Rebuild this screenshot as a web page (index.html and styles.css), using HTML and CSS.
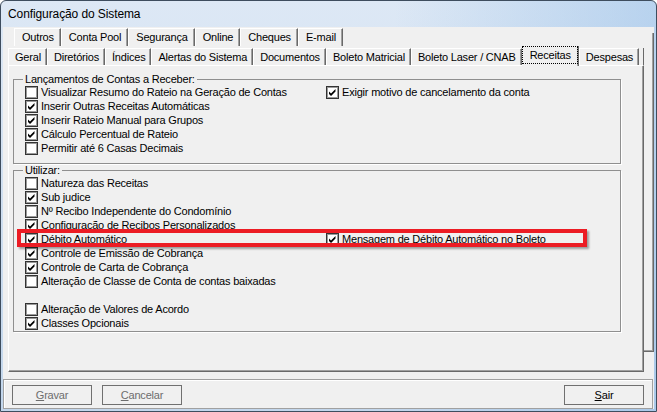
FILE: index.html
```html
<!DOCTYPE html>
<html lang="pt">
<head>
<meta charset="utf-8">
<title>Configuração do Sistema</title>
<link rel="stylesheet" href="styles.css">
</head>
<body>
<div class="window">
  <div class="titlebar"><span class="title">Configuração do Sistema</span></div>
  <div class="client">
    <div class="tabstack">
      <div class="tabmain">
        <div class="tabrow row1">
          <div class="tab">Outros</div>
          <div class="tab">Conta Pool</div>
          <div class="tab">Segurança</div>
          <div class="tab">Online</div>
          <div class="tab">Cheques</div>
          <div class="tab">E-mail</div>
        </div>
        <div class="tabrow row2">
          <div class="tab">Geral</div>
          <div class="tab">Diretórios</div>
          <div class="tab">Índices</div>
          <div class="tab">Alertas do Sistema</div>
          <div class="tab">Documentos</div>
          <div class="tab">Boleto Matricial</div>
          <div class="tab">Boleto Laser / CNAB</div>
          <div class="tab active"><span class="focus">Receitas</span></div>
          <div class="tab">Despesas</div>
          <div class="tabfill"></div>
        </div>
        <div class="panel">
          <fieldset class="group g1">
            <legend>Lançamentos de Contas a Receber:</legend>
            <div class="row">
              <label class="cb"><span class="box"></span>Visualizar Resumo do Rateio na Geração de Contas</label>
              <label class="cb"><span class="box"><svg viewBox="0 0 11 11"><path d="M2 4.5 L4 6.5 L8.5 2 L8.5 4.5 L4 9 L2 7 Z"/></svg></span>Exigir motivo de cancelamento da conta</label>
            </div>
            <div class="row">
              <label class="cb"><span class="box"><svg viewBox="0 0 11 11"><path d="M2 4.5 L4 6.5 L8.5 2 L8.5 4.5 L4 9 L2 7 Z"/></svg></span>Inserir Outras Receitas Automáticas</label>
            </div>
            <div class="row">
              <label class="cb"><span class="box"><svg viewBox="0 0 11 11"><path d="M2 4.5 L4 6.5 L8.5 2 L8.5 4.5 L4 9 L2 7 Z"/></svg></span>Inserir Rateio Manual para Grupos</label>
            </div>
            <div class="row">
              <label class="cb"><span class="box"><svg viewBox="0 0 11 11"><path d="M2 4.5 L4 6.5 L8.5 2 L8.5 4.5 L4 9 L2 7 Z"/></svg></span>Cálculo Percentual de Rateio</label>
            </div>
            <div class="row">
              <label class="cb"><span class="box"></span>Permitir até 6 Casas Decimais</label>
            </div>
          </fieldset>
          <fieldset class="group g2">
            <legend>Utilizar:</legend>
            <div class="row">
              <label class="cb"><span class="box"></span>Natureza das Receitas</label>
            </div>
            <div class="row">
              <label class="cb"><span class="box"><svg viewBox="0 0 11 11"><path d="M2 4.5 L4 6.5 L8.5 2 L8.5 4.5 L4 9 L2 7 Z"/></svg></span>Sub judice</label>
            </div>
            <div class="row">
              <label class="cb"><span class="box"></span>Nº Recibo Independente do Condomínio</label>
            </div>
            <div class="row">
              <label class="cb"><span class="box"><svg viewBox="0 0 11 11"><path d="M2 4.5 L4 6.5 L8.5 2 L8.5 4.5 L4 9 L2 7 Z"/></svg></span>Configuração de Recibos Personalizados</label>
            </div>
            <div class="row">
              <label class="cb"><span class="box"><svg viewBox="0 0 11 11"><path d="M2 4.5 L4 6.5 L8.5 2 L8.5 4.5 L4 9 L2 7 Z"/></svg></span>Débito Automático</label>
              <label class="cb"><span class="box"><svg viewBox="0 0 11 11"><path d="M2 4.5 L4 6.5 L8.5 2 L8.5 4.5 L4 9 L2 7 Z"/></svg></span>Mensagem de Débito Automático no Boleto</label>
            </div>
            <div class="row">
              <label class="cb"><span class="box"><svg viewBox="0 0 11 11"><path d="M2 4.5 L4 6.5 L8.5 2 L8.5 4.5 L4 9 L2 7 Z"/></svg></span>Controle de Emissão de Cobrança</label>
            </div>
            <div class="row">
              <label class="cb"><span class="box"><svg viewBox="0 0 11 11"><path d="M2 4.5 L4 6.5 L8.5 2 L8.5 4.5 L4 9 L2 7 Z"/></svg></span>Controle de Carta de Cobrança</label>
            </div>
            <div class="row">
              <label class="cb"><span class="box"></span>Alteração de Classe de Conta de contas baixadas</label>
            </div>
            <div class="row"></div>
            <div class="row">
              <label class="cb"><span class="box"></span>Alteração de Valores de Acordo</label>
            </div>
            <div class="row">
              <label class="cb"><span class="box"><svg viewBox="0 0 11 11"><path d="M2 4.5 L4 6.5 L8.5 2 L8.5 4.5 L4 9 L2 7 Z"/></svg></span>Classes Opcionais</label>
            </div>
          </fieldset>
          <div class="highlight"></div>
        </div>
      </div>
      <div class="backedge"></div>
    </div>
    <div class="footer">
      <button class="btn" disabled><u>G</u>ravar</button>
      <button class="btn" disabled><u>C</u>ancelar</button>
      <button class="btn sair"><u>S</u>air</button>
    </div>
  </div>
</div>
</body>
</html>
```
FILE: styles.css
```css
* { box-sizing: border-box; }
html, body { margin: 0; padding: 0; }
body {
  width: 657px;
  height: 412px;
  overflow: hidden;
  background: #ffffff;
  font-family: "Liberation Sans", Arial, sans-serif;
  font-size: 11px;
  letter-spacing: -0.2px;
  color: #000;
}
.window {
  width: 657px;
  height: 412px;
  display: flex;
  flex-direction: column;
  border: 1px solid #3e4d5e;
  border-radius: 6px 6px 0 0;
  background: linear-gradient(90deg, rgba(255,255,255,0) 60%, rgba(140,185,230,0.45) 100%), linear-gradient(180deg, #dde8f5 0%, #c2d6ec 100%);
  overflow: hidden;
}
.titlebar {
  height: 26px;
  flex: none;
  padding-left: 7px;
  line-height: 26px;
}
.title {
  font-size: 12px;
  letter-spacing: -0.1px;
  color: #000;
}
.client {
  flex: 1;
  margin: 0 2px 2px;
  background: #f0f0f0;
  display: flex;
  flex-direction: column;
}
.tabstack {
  display: flex;
  padding-left: 5px;
  margin-top: 1px;
}
.tabmain {
  width: 636px;
  display: flex;
  flex-direction: column;
}
.tabrow { display: flex; }
.row1 { height: 18px; padding-left: 6px; }
.row2 { height: 19px; align-items: flex-end; }
.tab {
  height: 18px;
  padding: 0 6px 0 7px;
  line-height: 17px;
  border-top: 1px solid #fff;
  border-left: 1px solid #fff;
  border-right: 1px solid #696969;
  box-shadow: inset -1px 0 0 #a0a0a0;
  white-space: nowrap;
}
.row2 .tab { height: 17px; line-height: 16px; padding: 0 5px 0 6px; }
.row2 .tab.active {
  height: 20px;
  margin-bottom: -1px;
  padding: 0;
  background: #f0f0f0;
  position: relative;
  z-index: 1;
  border-top: none;
  border-left: none;
}
.focus {
  display: block;
  height: 18px;
  padding: 0 6px 0 7px;
  line-height: 16px;
  border: 1px dotted #000;
}
.tabfill {
  flex: 1;
  height: 17px;
  border-right: 1px solid #696969;
}
.panel {
  position: relative;
  height: 307px;
  border-top: 1px solid #fff;
  border-left: 1px solid #fff;
  border-right: 1px solid #696969;
  border-bottom: 1px solid #696969;
  box-shadow: inset -1px -1px 0 #a0a0a0;
}
.group {
  width: 608px;
  min-width: 0;
  margin: 0 0 0 4px;
  border: 1px solid #8f8f8f;
  box-shadow: 1px 1px 0 #fff;
  padding: 0 0 8px 11px;
}
.group legend {
  padding: 0 2px;
  margin-left: -2px;
  line-height: 12px;
  height: 12px;
}
.g1 { margin-top: 7px; }
.g2 { margin-top: 0; padding-bottom: 1px; }
.row {
  display: grid;
  grid-template-columns: 301px 1fr;
  height: 14px;
  align-items: center;
}
.cb {
  display: flex;
  align-items: center;
  gap: 3px;
  white-space: nowrap;
  line-height: 14px;
}
.box {
  flex: none;
  width: 13px;
  height: 13px;
  border: 1px solid #333;
  box-shadow: inset 0 0 0 1px #9a9a9a;
  background: #fff;
  display: flex;
}
.box svg { width: 11px; height: 11px; fill: #000; }
.highlight {
  position: absolute;
  left: 8px;
  top: 163px;
  width: 570px;
  height: 18px;
  border: 4px solid #ec1c24;
  box-shadow: 2px 2px 2px rgba(0,0,0,0.35);
}
.backedge {
  width: 10px;
  height: 319px;
  margin-top: 5px;
  border-right: 1px solid #696969;
  border-bottom: 1px solid #696969;
  box-shadow: inset -1px -1px 0 #a0a0a0;
}
.footer {
  height: 30px;
  margin: 7px 1px 0 0;
  border: 1px solid #a0a0a0;
  box-shadow: inset 1px 1px 0 #fff;
  display: flex;
  align-items: flex-start;
  gap: 10px;
  padding: 5px 8px 0 8px;
}
.btn {
  width: 80px;
  height: 20px;
  border: 1px solid #707070;
  background: #f0f0f0;
  font-family: "Liberation Sans", Arial, sans-serif;
  font-size: 11px;
  letter-spacing: -0.2px;
  color: #000;
  padding: 0;
}
.btn:disabled { color: #6d6d6d; }
.sair { margin-left: auto; }
```
